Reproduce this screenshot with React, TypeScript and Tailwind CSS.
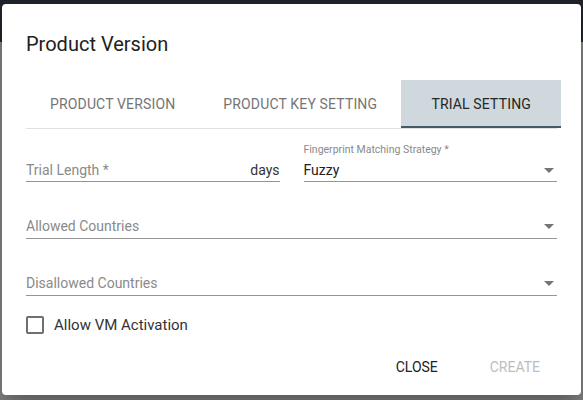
import { useState } from 'react'

const tabs = ['Product Version', 'Product Key Setting', 'Trial Setting']

const ArrowDrop = () => (
  <svg width="10" height="5" viewBox="0 0 10 5" className="mr-[3px] shrink-0">
    <path d="M0 0l5 5 5-5z" fill="#757575" />
  </svg>
)

const SelectField = ({ label }: { label: string }) => (
  <div className="flex flex-col">
    <div className="h-[14px]" />
    <div className="flex h-[26px] items-center justify-between border-b border-[#949494] pt-px">
      <span className="text-[14px] text-[#8a8a8a]">{label}</span>
      <ArrowDrop />
    </div>
  </div>
)

const App = () => {
  const [active, setActive] = useState(2)
  const [allowVm, setAllowVm] = useState(false)

  return (
    <div className="relative h-[400px] w-[583px] overflow-hidden font-['Roboto',sans-serif]">
      <div className="h-[42px] bg-[#1f2228]" />
      <div className="h-[358px] bg-[#7f7f7f]" />

      {/* Dialog */}
      <div className="absolute left-[2px] top-[4px] h-[391px] w-[579px] rounded-[4px] bg-white shadow-[0_11px_15px_-7px_rgba(0,0,0,0.2),0_24px_38px_3px_rgba(0,0,0,0.14)]">
        <h2 className="px-6 pt-6 text-[20px] font-normal leading-8 text-[#212121]">Product Version</h2>

        <div className="px-6">
          {/* Tabs */}
          <div className="mt-5 flex border-b border-[#e0e0e0]">
            {tabs.map((t, i) => (
              <button
                key={t}
                onClick={() => setActive(i)}
                className={`relative flex h-12 min-w-[160px] shrink-0 items-center justify-center whitespace-nowrap px-6 text-[14px] font-normal uppercase tracking-[0.15px] ${
                  active === i ? 'bg-[#cfd8dc] text-[#262626]' : 'text-[#757575]'
                }`}
              >
                {t}
                {active === i && <span className="absolute bottom-0 left-0 h-[2px] w-full bg-[#455a64]" />}
              </button>
            ))}
          </div>

          {/* Row 1 */}
          <div className="mt-[13px] grid grid-cols-2 gap-6">
            <div className="flex flex-col">
              <div className="h-[14px]" />
              <div className="flex h-[26px] items-center justify-between border-b border-[#949494] pt-[3px]">
                <span className="text-[14px] text-[#8a8a8a]">Trial Length *</span>
                <span className="text-[14px] text-[#333]">days</span>
              </div>
            </div>
            <div className="flex flex-col">
              <div className="h-[14px] pt-px text-[10.5px] leading-[14px] text-[#8a8a8a]">Fingerprint Matching Strategy *</div>
              <div className="flex h-[26px] items-center justify-between border-b border-[#949494] pt-[3px]">
                <span className="text-[14px] text-[#212121]">Fuzzy</span>
                <ArrowDrop />
              </div>
            </div>
          </div>

          <div className="mt-[17px]">
            <SelectField label="Allowed Countries" />
          </div>
          <div className="mt-[17px]">
            <SelectField label="Disallowed Countries" />
          </div>

          {/* Checkbox */}
          <label className="mt-5 flex h-[18px] cursor-pointer items-center gap-[10px]">
            <input type="checkbox" checked={allowVm} onChange={e => setAllowVm(e.target.checked)} className="hidden" />
            <span className="h-[18px] w-[18px] rounded-[2px] border-2 border-[#6f6f6f]" />
            <span className="text-[15px] text-[#333]">Allow VM Activation</span>
          </label>

          {/* Actions */}
          <div className="mt-[15px] flex justify-end gap-[33px] pr-[9px]">
            <button className="h-9 min-w-16 px-2 text-[14px] font-normal uppercase text-[#212121]">Close</button>
            <button disabled className="h-9 min-w-16 px-2 text-[14px] font-normal uppercase text-[#bdbdbd]">Create</button>
          </div>
        </div>
      </div>
    </div>
  )
}

export default App
